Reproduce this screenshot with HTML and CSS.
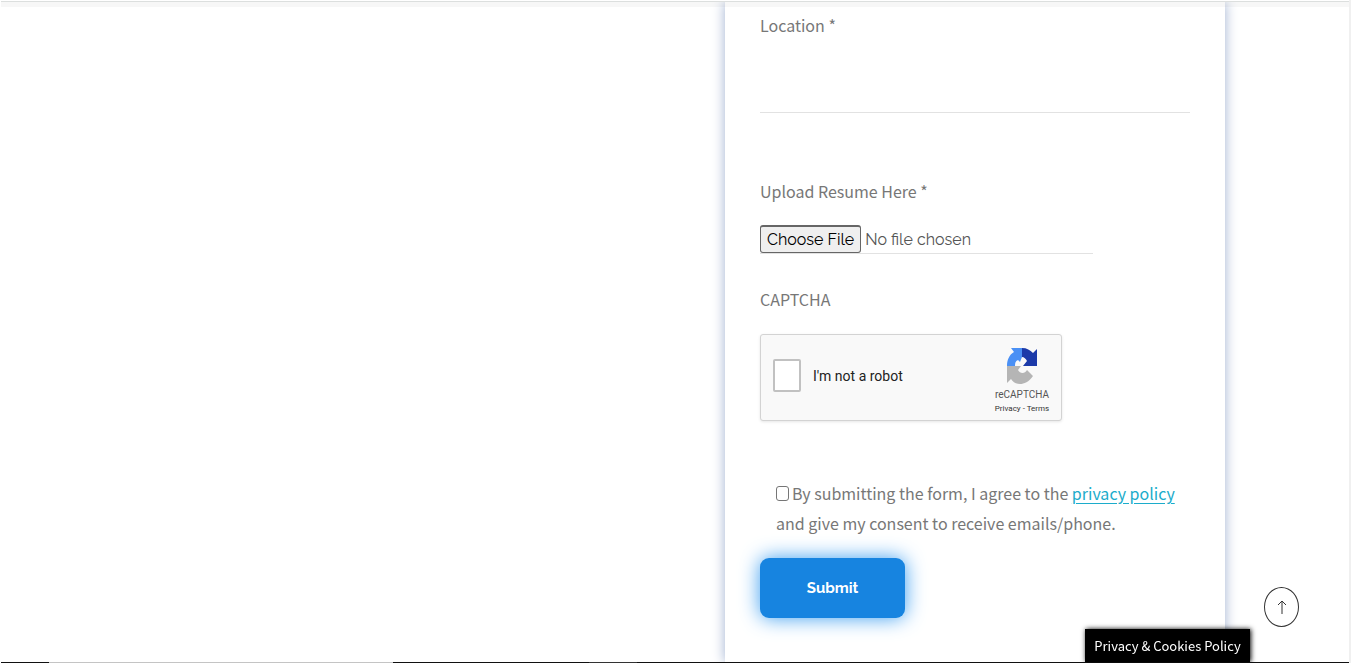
FILE: index.html
```html
<!DOCTYPE html>
<html lang="en">
<head>
<meta charset="utf-8">
<title>Apply</title>
<link rel="stylesheet" href="styles.css">
</head>
<body>
<div class="page">
  <header class="topbar"></header>
  <main class="content">
    <form class="card">
      <label class="label" for="location">Location *</label>
      <input class="text-input" id="location" type="text">
      <label class="label label-upload" for="resume">Upload Resume Here *</label>
      <input class="file-input" id="resume" type="file">
      <div class="label label-captcha">CAPTCHA</div>
      <div class="captcha">
        <input class="captcha-box" id="robot" type="checkbox">
        <label class="captcha-text" for="robot">I'm not a robot</label>
        <div class="captcha-brand">
          <svg class="captcha-logo" viewBox="0 0 30 36" preserveAspectRatio="none" aria-hidden="true">
            <path fill="#1c3aa9" d="M15 0C20 0 23 2 26 5L30 1V18H16L20 13C19 11 17 9 15 9Z"/>
            <path fill="#4a90f5" d="M15 0H4L7 4C2 7 0 12 0 18H8C8 14 9 13 11 12L13 14L15 9Z"/>
            <path fill="#b5b5b5" d="M0 18H14L11 22C13 26 18 26 20 22L23 25L26 28C22 34 17 36 13 36C9 36 6 34 4 31L0 35Z"/>
          </svg>
          <span class="captcha-name">reCAPTCHA</span>
          <span class="captcha-links"><a href="#">Privacy</a> - <a href="#">Terms</a></span>
        </div>
      </div>
      <div class="consent">
        <input class="consent-box" id="consent" type="checkbox"><label for="consent">By submitting the form, I agree to the <a class="link" href="#">privacy policy</a> and give my consent to receive emails/phone.</label>
      </div>
      <button class="submit" type="button">Submit</button>
    </form>
  </main>
  <footer class="strip"><i class="s1"></i><i class="s2"></i><i class="s3"></i><i class="s4"></i><i class="s5"></i></footer>
</div>
<button class="to-top" type="button" aria-label="Back to top">
  <svg class="arrow" viewBox="0 0 10 14" aria-hidden="true"><path d="M5 14V1M1 5L5 1L9 5" fill="none" stroke="#333"/></svg>
</button>
<button class="cookies" type="button">Privacy &amp; Cookies Policy</button>
</body>
</html>
```
FILE: styles.css
```css
* { box-sizing: border-box; }
body {
  margin: 0;
  background: #fff;
  color: #777;
  font-family: "Noto Sans CJK SC", "Open Sans", sans-serif;
  font-size: 16px;
  font-weight: 400;
  line-height: 30px;
}
.page {
  display: flex;
  flex-direction: column;
  min-height: 100vh;
  margin-right: 4px;
  padding: 1px 0 0 1px;
  border-right: 2px solid #f0f0f0;
}
.topbar {
  position: relative;
  z-index: 1;
  height: 6px;
  margin-bottom: -5px;
  background: rgba(0, 0, 0, .03);
  border-top: 1px solid #dcdfde;
}
.content {
  flex: 1;
  display: grid;
  grid-template-columns: 724fr 500px 124fr;
  overflow: hidden;
}
.card {
  grid-column: 2;
  display: flex;
  flex-direction: column;
  align-items: flex-start;
  padding: 8px 35px 0;
  background: #fff;
  box-shadow: 0 0 12px #9fb0d0;
}
.label { display: block; }
.text-input {
  width: 100%;
  height: 73px;
  border: 0;
  border-bottom: 1px solid #e2e2e2;
  background: transparent;
  font: inherit;
}
.label-upload { margin-top: 63px; }
.file-input {
  width: 333px;
  max-width: 100%;
  height: 29px;
  margin-top: 19px;
  border-bottom: 1px solid #e2e2e2;
  font-family: Raleway, "Noto Sans CJK SC", sans-serif;
  font-size: 16px;
  font-weight: 400;
  line-height: 24px;
  color: #555;
}
.file-input::file-selector-button {
  height: 28px;
  margin: 0 4px 0 0;
  padding: 0 6px;
  border: 1px solid #666;
  border-top-width: 2px;
  border-radius: 3px;
  background: #efefef;
  color: #000;
  font-family: inherit;
  font-size: 16px;
  font-weight: 400;
  line-height: 24px;
}
.label-captcha { margin-top: 30px; }
.captcha {
  display: flex;
  align-items: center;
  width: 302px;
  height: 87px;
  margin-top: 20px;
  padding: 0 11px 4px 12px;
  border: 1px solid #d3d3d3;
  border-radius: 3px;
  background: #f9f9f9;
  box-shadow: 0 1px 3px rgba(0, 0, 0, .1);
  font-family: Roboto, sans-serif;
  font-weight: 400;
}
.captcha-box {
  appearance: none;
  width: 28px;
  height: 33px;
  margin: 0 12px 0 0;
  border: 2px solid #c1c1c1;
  border-radius: 2px;
  background: #fff;
}
.captcha-text { flex: 1; color: #222; font-size: 14px; }
.captcha-brand {
  display: flex;
  flex-direction: column;
  align-items: center;
  width: 56px;
  color: #555;
  white-space: nowrap;
}
.captcha-logo { width: 30px; height: 36px; margin-top: 12px; }
.captcha-name { margin-top: 4px; font-size: 10px; line-height: 14px; }
.captcha-links { color: #333; font-size: 8px; line-height: 14px; }
.captcha-links a { color: inherit; text-decoration: none; }
.consent { margin-top: 57px; padding-left: 16px; }
.consent-box {
  appearance: none;
  width: 13px;
  height: 15px;
  margin: 0 3px 0 0;
  vertical-align: -1px;
  border: 1px solid #767676;
  border-radius: 3px;
}
.link { color: #1caccb; text-underline-offset: 3px; }
.submit {
  width: 145px;
  height: 60px;
  margin-top: 20px;
  border: 0;
  border-radius: 9px;
  background: #1784e0;
  box-shadow: 0 0 20px #3b9df0;
  color: #fff;
  font-family: Raleway, "Noto Sans CJK SC", sans-serif;
  font-size: 15px;
  font-weight: 700;
}
.strip { display: flex; height: 1px; background: #111; }
.s1 { flex: 48; }
.s2 { flex: 344; background: #c4c4c4; }
.s3 { flex: 196; }
.s4 { flex: 48; background: #333; }
.s5 { flex: 712; }
.to-top {
  position: fixed;
  right: 56px;
  bottom: 36px;
  display: grid;
  place-items: center;
  width: 35px;
  height: 40px;
  padding: 0;
  border: 1px solid #333;
  border-radius: 50%;
  background: #fff;
}
.arrow { width: 10px; height: 14px; }
.cookies {
  position: fixed;
  right: 105px;
  bottom: 1px;
  height: 33px;
  width: 165px;
  padding: 0;
  border: 0;
  background: #000;
  box-shadow: 1px 0 5px #000;
  color: #fff;
  font-family: "Noto Sans CJK SC", sans-serif;
  font-size: 13px;
  font-weight: 400;
}
```
